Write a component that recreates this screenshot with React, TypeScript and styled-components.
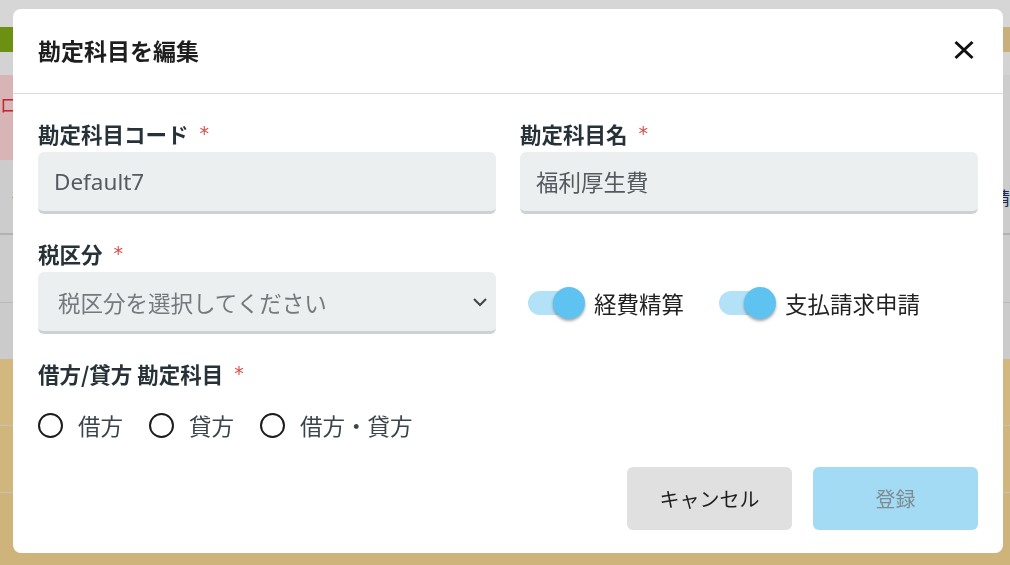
import React from "react";
import styled, { createGlobalStyle } from "styled-components";

const Global = createGlobalStyle`
  html, body { margin: 0; padding: 0; }
  body {
    width: 1010px;
    height: 565px;
    overflow: hidden;
    font-family: "Noto Sans", "Noto Sans CJK JP", sans-serif;
  }
  * { box-sizing: border-box; }
`;

/* ---------- dimmed page behind the dialog ---------- */
const Page = styled.div`
  width: 1010px;
  height: 565px;
  display: flex;
  flex-direction: column;
  overflow: hidden;
  background: #cecece;
`;
const Strip = styled.div<{ $h: number; $bg: string; $line?: string }>`
  height: ${(p) => p.$h}px;
  flex: none;
  background: ${(p) => p.$bg};
  border-bottom: ${(p) => (p.$line ? `1px solid ${p.$line}` : "none")};
  display: flex;
  align-items: center;
  justify-content: space-between;
`;
const BandPart = styled.div<{ $bg: string; $w?: number }>`
  height: 100%;
  background: ${(p) => p.$bg};
  flex: ${(p) => (p.$w ? `0 0 ${p.$w}px` : "1")};
`;
const AlertPart = styled.div`
  height: 100%;
  flex: 0 0 520px;
  background: #d8b4b6;
  color: #c0262d;
  font-size: 18px;
  padding: 14px 0 0 0;
  line-height: 30px;
  white-space: nowrap;
  overflow: hidden;
  font-family: "Noto Sans CJK JP", sans-serif;
`;
const PageCell = styled.span<{ $c: string }>`
  font-size: 18px;
  color: ${(p) => p.$c};
  white-space: nowrap;
  font-family: "Noto Sans CJK JP", sans-serif;
`;

/* ---------- dialog ---------- */
const Backdrop = styled.div`
  position: fixed;
  inset: 0;
  display: flex;
  justify-content: flex-start;
  align-items: flex-start;
  padding: 9px 0 0 13px;
`;
const Dialog = styled.div`
  width: 990px;
  background: #ffffff;
  border-radius: 8px;
  overflow: hidden;
  font-family: "Noto Sans", "Noto Sans CJK JP", sans-serif;
`;
const Header = styled.div`
  height: 85px;
  padding: 0 25px 2px 25px;
  display: flex;
  align-items: center;
  justify-content: space-between;
  border-bottom: 1px solid #dadada;
`;
const Title = styled.h2`
  margin: 0;
  font-size: 23px;
  font-weight: 700;
  color: #1e1e1e;
  font-family: "Noto Sans CJK JP", sans-serif;
  line-height: 30px;
`;
const CloseButton = styled.button`
  width: 26px;
  height: 26px;
  padding: 0;
  margin-right: 1px;
  border: none;
  background: transparent;
  display: flex;
  align-items: center;
  justify-content: center;
  cursor: pointer;
`;
const Body = styled.div`
  padding: 25px 25px 23px 25px;
`;
const Grid = styled.div`
  display: grid;
  grid-template-columns: 1fr 1fr;
  column-gap: 24px;
  row-gap: 25px;
`;
const Field = styled.div`
  display: flex;
  flex-direction: column;
`;
const Label = styled.label`
  font-family: "Noto Sans CJK JP", sans-serif;
  font-size: 21.5px;
  font-weight: 700;
  color: #263238;
  line-height: 30px;
  height: 30px;
  margin-bottom: 3px;
  display: flex;
  align-items: center;
`;
const Req = styled.span`
  color: #dc4a45;
  font-family: "DejaVu Sans", sans-serif;
  font-size: 19px;
  font-weight: 400;
  margin-left: 11px;
  line-height: 30px;
  position: relative;
  top: -1px;
`;
const TextInput = styled.input`
  height: 62px;
  width: 100%;
  border: none;
  border-bottom: 3px solid #cdd1d4;
  border-radius: 6px;
  background: #eceff0;
  padding: 0 16px;
  font-family: "Noto Sans", "Noto Sans CJK JP", sans-serif;
  font-size: 22.5px;
  color: #555a5e;
  outline: none;
`;
const SelectBox = styled.div`
  height: 62px;
  width: 100%;
  border-bottom: 3px solid #cdd1d4;
  border-radius: 6px;
  background: #eceff0;
  padding: 0 8px 0 20px;
  display: flex;
  align-items: center;
  justify-content: space-between;
  font-family: "Noto Sans CJK JP", sans-serif;
  font-size: 22.5px;
  color: #74797d;
`;
const ToggleCell = styled.div`
  align-self: end;
  height: 62px;
  padding-left: 8px;
  display: flex;
  align-items: center;
  gap: 35px;
`;
const ToggleGroup = styled.div`
  display: flex;
  align-items: center;
  gap: 10px;
`;
const Track = styled.div`
  position: relative;
  width: 56px;
  height: 24px;
  border-radius: 12px;
  background: #b3e1f7;
`;
const Knob = styled.span`
  position: absolute;
  right: -1px;
  top: -4px;
  width: 32px;
  height: 32px;
  border-radius: 50%;
  background: #5fc3f1;
  box-shadow: 0 2px 3px rgba(0, 0, 0, 0.35);
`;
const ToggleText = styled.span`
  font-family: "Noto Sans CJK JP", sans-serif;
  font-size: 22.5px;
  color: #222;
  line-height: 30px;
`;
const FullRow = styled.div`
  grid-column: 1 / -1;
  display: flex;
  flex-direction: column;
`;
const RadioRow = styled.div`
  margin-top: 18px;
  height: 30px;
  display: flex;
  align-items: center;
  gap: 26px;
`;
const RadioItem = styled.label`
  display: flex;
  align-items: center;
  gap: 15px;
  font-family: "Noto Sans CJK JP", sans-serif;
  font-size: 22.5px;
  color: #3b444b;
  line-height: 30px;
`;
const RadioCircle = styled.span`
  width: 25px;
  height: 25px;
  border-radius: 50%;
  border: 2px solid #1c1c1c;
  flex: none;
`;
const Actions = styled.div`
  margin-top: 27px;
  display: flex;
  justify-content: flex-end;
  gap: 21px;
`;
const Button = styled.button<{ $primary?: boolean }>`
  width: 165px;
  height: 63px;
  border: none;
  border-radius: 6px;
  background: ${(p) => (p.$primary ? "#a3dbf5" : "#e0e0e0")};
  color: ${(p) => (p.$primary ? "#7f8b92" : "#1e1e1e")};
  font-family: "Noto Sans CJK JP", sans-serif;
  font-size: 20px;
  cursor: pointer;
`;

export default function App() {
  return (
    <>
      <Global />
      <Page>
        <Strip $h={27} $bg="#d6d6d6" />
        <Strip $h={25} $bg="#d6d6d6">
          <BandPart $bg="#6b9012" />
          <BandPart $bg="#c9b07b" $w={120} />
        </Strip>
        <Strip $h={23} $bg="#d3d3d3" />
        <Strip $h={85} $bg="#cdcdcd">
          <AlertPart>ロ　ど</AlertPart>
        </Strip>
        <Strip $h={73} $bg="#cccccc">
          <PageCell $c="#3a2c10">&nbsp;&nbsp;&nbsp;部</PageCell>
          <PageCell $c="#1b2a5a">請</PageCell>
        </Strip>
        <Strip $h={2} $bg="#b2b2b2" />
        <Strip $h={68} $bg="#cccccc" $line="#b9b9b9" />
        <Strip $h={56} $bg="#cbcbcb" />
        <Strip $h={67} $bg="#d2b87f" $line="#c7c2b7" />
        <Strip $h={67} $bg="#d0b67d" $line="#c7c2b7" />
        <Strip $h={80} $bg="#ceb47b" />
      </Page>

      <Backdrop>
        <Dialog role="dialog" aria-labelledby="dlg-title">
          <Header>
            <Title id="dlg-title">勘定科目を編集</Title>
            <CloseButton aria-label="閉じる">
              <svg width="24" height="24" viewBox="0 0 24 24">
                <path d="M3.5 4 L20.5 20 M20.5 4 L3.5 20" stroke="#111" strokeWidth="3" fill="none" />
              </svg>
            </CloseButton>
          </Header>
          <Body>
            <Grid>
              <Field>
                <Label>
                  勘定科目コード<Req>*</Req>
                </Label>
                <TextInput defaultValue="Default7" />
              </Field>
              <Field>
                <Label>
                  勘定科目名<Req>*</Req>
                </Label>
                <TextInput defaultValue="福利厚生費" />
              </Field>
              <Field>
                <Label>
                  税区分<Req>*</Req>
                </Label>
                <SelectBox>
                  <span>税区分を選択してください</span>
                  <svg width="16" height="10" viewBox="0 0 16 10">
                    <path d="M2 2 L8 8 L14 2" stroke="#444" strokeWidth="2" fill="none" />
                  </svg>
                </SelectBox>
              </Field>
              <ToggleCell>
                <ToggleGroup>
                  <Track>
                    <Knob />
                  </Track>
                  <ToggleText>経費精算</ToggleText>
                </ToggleGroup>
                <ToggleGroup>
                  <Track>
                    <Knob />
                  </Track>
                  <ToggleText>支払請求申請</ToggleText>
                </ToggleGroup>
              </ToggleCell>
              <FullRow>
                <Label>
                  借方/貸方 勘定科目<Req>*</Req>
                </Label>
                <RadioRow>
                  <RadioItem>
                    <RadioCircle />
                    借方
                  </RadioItem>
                  <RadioItem>
                    <RadioCircle />
                    貸方
                  </RadioItem>
                  <RadioItem>
                    <RadioCircle />
                    借方・貸方
                  </RadioItem>
                </RadioRow>
              </FullRow>
            </Grid>
            <Actions>
              <Button>キャンセル</Button>
              <Button $primary>登録</Button>
            </Actions>
          </Body>
        </Dialog>
      </Backdrop>
    </>
  );
}
